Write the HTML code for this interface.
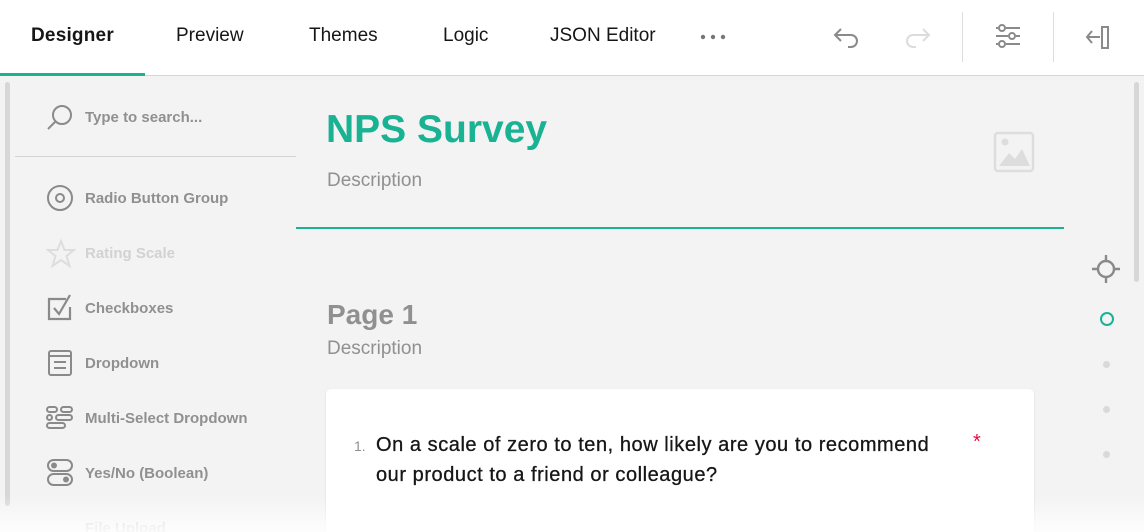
<!DOCTYPE html>
<html style="width:1144px;height:532px;overflow:hidden"><head><style>
*{margin:0;padding:0;box-sizing:border-box}
body{width:1144px;height:532px;overflow:hidden;background:#f3f3f3;font-family:"Liberation Sans",sans-serif;position:relative}
.top{position:absolute;left:0;top:0;width:1144px;height:76px;background:#fff;border-bottom:1px solid #d6d6d6}
.tab{position:absolute;top:25px;font-size:19px;color:#161616}
.abs{position:absolute}
.side{position:absolute;left:15px;top:77px;width:281px;height:455px}
.item{position:absolute;left:85px;font-size:15px;font-weight:bold;color:#909090}
.ic{position:absolute;left:46px}
</style></head><body>
<div class="top">
  <div class="tab" style="left:31px;font-weight:bold;letter-spacing:0.2px">Designer</div>
  <div class="abs" style="left:0;top:73px;width:145px;height:3px;background:#19b394"></div>
  <div class="tab" style="left:176px">Preview</div>
  <div class="tab" style="left:309px">Themes</div>
  <div class="tab" style="left:443px">Logic</div>
  <div class="tab" style="left:550px">JSON Editor</div>
  <svg class="abs" style="left:698px;top:32px" width="30" height="10"><circle cx="5" cy="5" r="2.2" fill="#777"/><circle cx="15" cy="5" r="2.2" fill="#777"/><circle cx="25" cy="5" r="2.2" fill="#777"/></svg>
  <svg class="abs" style="left:832px;top:24px" width="30" height="24" fill="none" stroke="#8a8a8a" stroke-width="2"><path d="M9 5L3 11l6 6M3 11h16a6 6 0 0 1 0 12h-3"/></svg>
  <svg class="abs" style="left:902px;top:24px" width="30" height="24" fill="none" stroke="#dcdcdc" stroke-width="2"><path d="M21 5l6 6-6 6M27 11H11a6 6 0 0 0 0 12h3"/></svg>
  <div class="abs" style="left:962px;top:12px;width:1px;height:50px;background:#ddd"></div>
  <svg class="abs" style="left:994px;top:23px" width="28" height="28" fill="none" stroke="#8a8a8a" stroke-width="2"><circle cx="8" cy="5" r="3"/><path d="M12 5h14M2 5h2"/><circle cx="18" cy="13" r="3"/><path d="M2 13h12M22 13h4"/><circle cx="8" cy="21" r="3"/><path d="M12 21h14M2 21h2"/></svg>
  <div class="abs" style="left:1053px;top:12px;width:1px;height:50px;background:#ddd"></div>
  <svg class="abs" style="left:1084px;top:24px" width="30" height="26" fill="none" stroke="#8a8a8a" stroke-width="2"><path d="M8 7l-5 6 5 6M3 13h13"/><rect x="18" y="3" width="6" height="21"/></svg>
</div>
<div class="abs" style="left:5px;top:82px;width:5px;height:424px;background:#d7d7d7;border-radius:3px"></div>
<div class="side">
  <svg class="abs" style="left:31px;top:26px" width="28" height="28" fill="none" stroke="#8a8a8a" stroke-width="2"><circle cx="16" cy="12" r="9"/><path d="M10 18L2 26"/></svg>
  <div class="abs" style="left:70px;top:32px;font-size:15px;font-weight:bold;color:#909090">Type to search...</div>
  <div class="abs" style="left:0;top:79px;width:281px;height:1px;background:#d4d4d4"></div>
</div>
<svg class="ic" style="top:184px" width="28" height="28" fill="none" stroke="#8a8a8a" stroke-width="2"><circle cx="14" cy="14" r="12"/><circle cx="14" cy="14" r="4"/></svg>
<div class="item" style="top:190px">Radio Button Group</div>
<svg class="ic" style="top:239px" width="30" height="30" fill="none" stroke="#ddd" stroke-width="2"><path d="M15 2l3.5 9H28l-7.5 6 3 10L15 21l-8.5 6 3-10L2 11h9.5z"/></svg>
<div class="item" style="top:245px;color:#d2d2d2">Rating Scale</div>
<svg class="ic" style="top:294px" width="30" height="30" fill="none" stroke="#8a8a8a" stroke-width="2.2"><path d="M20 5H3v20h21V13"/><path d="M8 14l5 6 11-19"/></svg>
<div class="item" style="top:300px">Checkboxes</div>
<svg class="ic" style="top:349px" width="28" height="28" fill="none" stroke="#8a8a8a" stroke-width="2"><rect x="3" y="2" width="22" height="24" rx="2"/><path d="M3 7h22M8 13h12M8 19h12"/></svg>
<div class="item" style="top:355px">Dropdown</div>
<svg class="ic" style="top:405px" width="28" height="26" fill="none" stroke="#8a8a8a" stroke-width="2"><rect x="1" y="2" width="10" height="5" rx="2.5"/><rect x="15" y="2" width="11" height="5" rx="2.5"/><rect x="1" y="10" width="5" height="5" rx="2.5"/><rect x="10" y="10" width="16" height="5" rx="2.5"/><rect x="1" y="18" width="18" height="5" rx="2.5"/></svg>
<div class="item" style="top:410px">Multi-Select Dropdown</div>
<svg class="ic" style="top:458px" width="28" height="30" fill="none" stroke="#8a8a8a" stroke-width="2"><rect x="2" y="2" width="24" height="11" rx="5.5"/><circle cx="8" cy="7.5" r="2" fill="#8a8a8a"/><rect x="2" y="16" width="24" height="11" rx="5.5"/><circle cx="20" cy="21.5" r="2" fill="#8a8a8a"/></svg>
<div class="item" style="top:465px">Yes/No (Boolean)</div>
<div class="item" style="top:520px;color:#ccc">File Upload</div>

<div class="abs" style="left:326px;top:108px;font-size:39px;font-weight:bold;color:#19b394">NPS Survey</div>
<div class="abs" style="left:327px;top:170px;font-size:19px;color:#909090">Description</div>
<svg class="abs" style="left:993px;top:131px" width="42" height="42" fill="none"><rect x="2" y="2" width="38" height="38" rx="3" stroke="#ddd" stroke-width="2.5"/><circle cx="12" cy="11" r="3.5" fill="#ddd"/><path d="M6 35l10-13 6 6 7-10 8 17z" fill="#ddd"/></svg>
<div class="abs" style="left:296px;top:227px;width:768px;height:2px;background:#19b394"></div>

<div class="abs" style="left:327px;top:299px;font-size:28px;font-weight:bold;color:#909090">Page 1</div>
<div class="abs" style="left:327px;top:338px;font-size:19px;color:#909090">Description</div>

<div class="abs" style="left:326px;top:389px;width:708px;height:143px;background:#fff;border-radius:5px 5px 0 0;box-shadow:0 1px 2px rgba(0,0,0,.12)"></div>
<div class="abs" style="left:354px;top:438px;font-size:14px;color:#909090">1.</div>
<div class="abs" style="left:376px;top:430px;font-size:20px;line-height:30px;color:#161616;width:620px;letter-spacing:0.55px;-webkit-text-stroke:0.3px #161616">On a scale of zero to ten, how likely are you to recommend<br>our product to a friend or colleague?</div>
<div class="abs" style="left:973px;top:431px;font-size:20px;color:#e60a3e">*</div>

<svg class="abs" style="left:1091px;top:254px" width="30" height="30" fill="none" stroke="#8a8a8a" stroke-width="2.4"><circle cx="15" cy="15" r="8"/><path d="M15 1v6M15 23v6M1 15h6M23 15h6"/></svg>
<div class="abs" style="left:1100px;top:312px;width:14px;height:14px;border:2px solid #19b394;border-radius:50%"></div>
<div class="abs" style="left:1103px;top:361px;width:7px;height:7px;background:#d9d9d9;border-radius:50%"></div>
<div class="abs" style="left:1103px;top:406px;width:7px;height:7px;background:#d9d9d9;border-radius:50%"></div>
<div class="abs" style="left:1103px;top:451px;width:7px;height:7px;background:#d9d9d9;border-radius:50%"></div>
<div class="abs" style="left:1134px;top:82px;width:5px;height:200px;background:#d7d7d7;border-radius:3px"></div>

<div class="abs" style="left:0;top:495px;width:1144px;height:37px;background:linear-gradient(rgba(255,255,255,0),rgba(255,255,255,.85))"></div>
</body></html>
